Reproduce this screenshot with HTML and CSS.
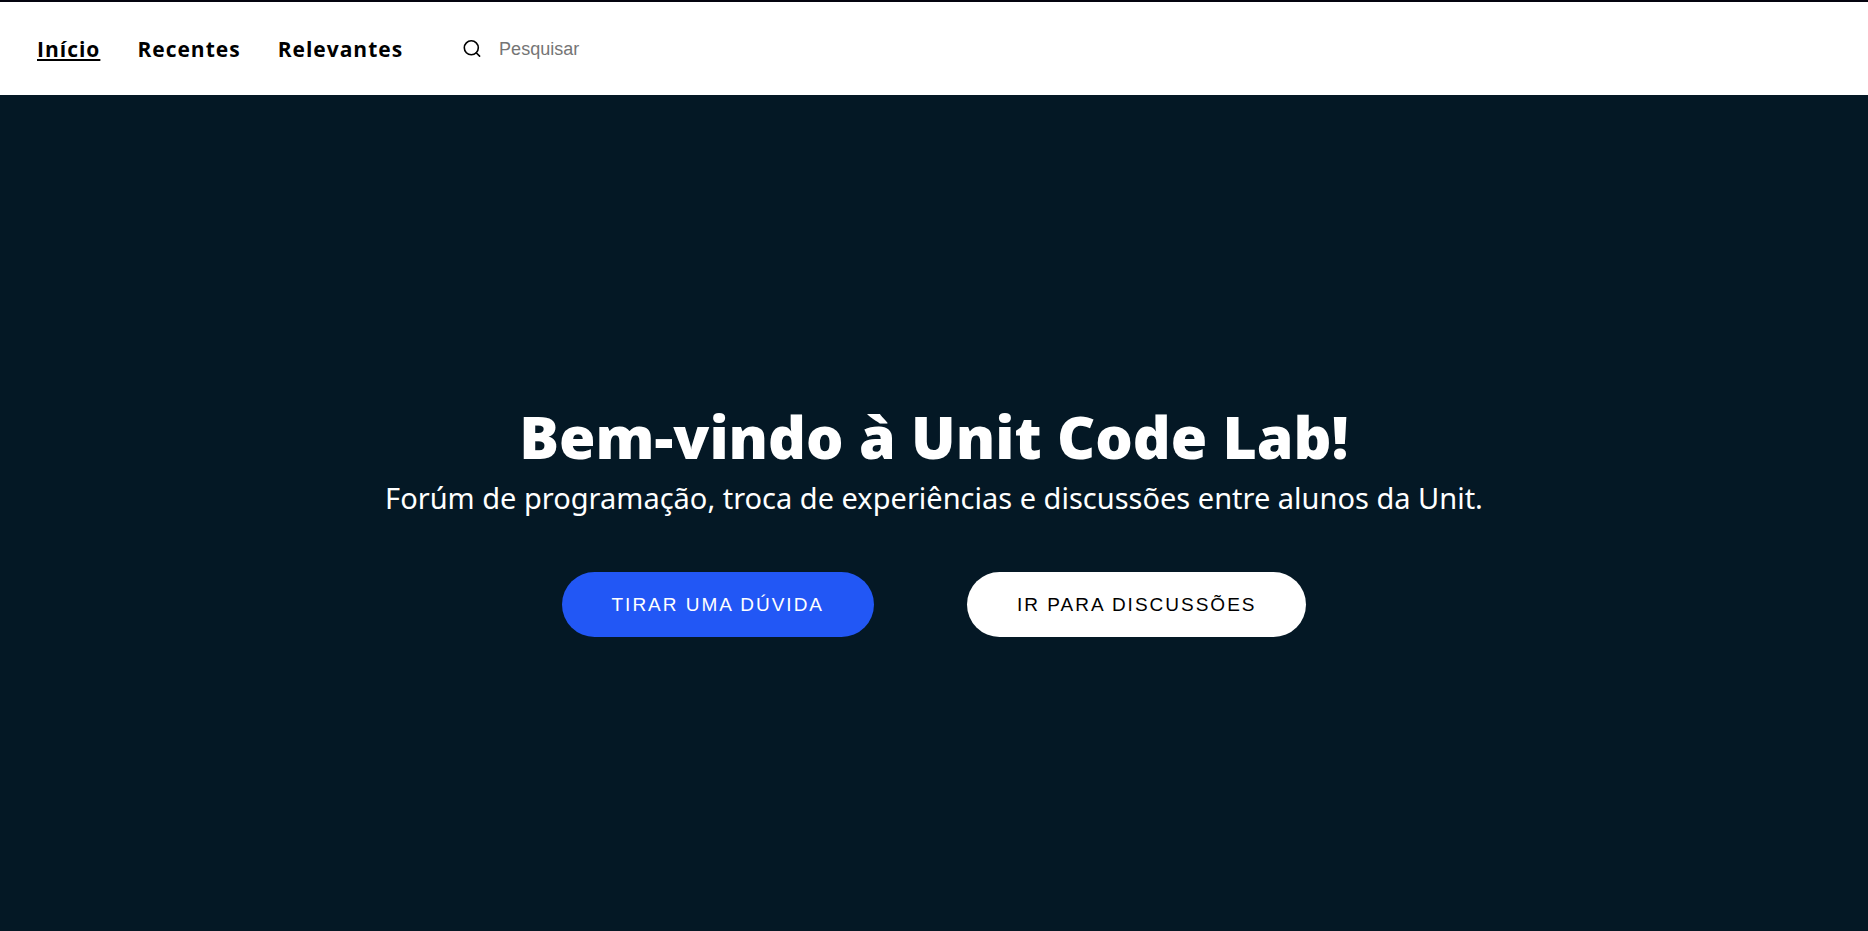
FILE: index.html
```html
<!DOCTYPE html>
<html lang="pt-BR">
<head>
<meta charset="utf-8">
<meta name="viewport" content="width=device-width, initial-scale=1">
<title>Unit Code Lab</title>
<link rel="stylesheet" href="styles.css">
</head>
<body>
<header class="header">
  <nav class="nav">
    <a class="nav-link active" href="#">Início</a>
    <a class="nav-link" href="#">Recentes</a>
    <a class="nav-link" href="#">Relevantes</a>
  </nav>
  <form class="search">
    <label class="search-label" for="search" aria-label="Pesquisar">
      <svg class="search-icon" viewBox="0 0 18 18" fill="none" stroke="currentColor" stroke-width="1.6" stroke-linecap="round"><circle cx="8.3" cy="7.8" r="7"/><path d="M13.2 12.7 16.6 16.1"/></svg>
    </label>
    <input class="search-input" id="search" type="text" placeholder="Pesquisar">
  </form>
</header>
<main class="hero">
  <h1 class="title">Bem-vindo à Unit Code Lab!</h1>
  <p class="subtitle">Forúm de programação, troca de experiências e discussões entre alunos da Unit.</p>
  <div class="actions">
    <button class="button primary" type="button">TIRAR UMA DÚVIDA</button>
    <button class="button" type="button">IR PARA DISCUSSÕES</button>
  </div>
</main>
</body>
</html>
```
FILE: styles.css
```css
* {
  box-sizing: border-box;
}

body {
  margin: 0;
  min-height: 100vh;
  display: flex;
  flex-direction: column;
  background: #041825;
  font-family: "Noto Sans", sans-serif;
}

.header {
  display: flex;
  align-items: center;
  gap: 60px;
  padding: 31px 37px;
  border-top: 2px solid #04040f;
  background: #fff;
  color: #000;
}

.nav {
  display: flex;
  gap: 37px;
  padding-top: 2px;
}

.nav-link {
  color: #000;
  font-family: "Open Sans", sans-serif;
  font-size: 21px;
  line-height: 29px;
  font-weight: 700;
  letter-spacing: 1px;
  text-decoration: none;
}

.nav-link.active {
  text-decoration: underline;
  text-decoration-thickness: 2px;
  text-underline-offset: 2px;
}

.search {
  display: flex;
  align-items: center;
  gap: 18px;
}

.search-label {
  display: flex;
}

.search-icon {
  width: 18px;
  height: 18px;
}

.search-input {
  width: 240px;
  padding: 0;
  border: 0;
  outline: 0;
  background: transparent;
  font: 18px/24px "Liberation Sans", Arial, sans-serif;
}

.search-input::placeholder {
  color: #757575;
}

.hero {
  flex: 1;
  display: flex;
  flex-direction: column;
  align-items: center;
  justify-content: center;
  padding: 32px 24px 24px;
  color: #fff;
  text-align: center;
}

.title {
  margin: 0 0 4px;
  font-size: 59px;
  line-height: 76px;
  font-weight: 900;
}

.subtitle {
  margin: 0;
  font-size: 29px;
  line-height: 40px;
}

.actions {
  display: flex;
  flex-wrap: wrap;
  justify-content: center;
  gap: 32px 93px;
  margin-top: 54px;
}

.button {
  padding: 21px 50px;
  border: 0;
  border-radius: 33px;
  background: #fff;
  color: #000;
  font: 19px/23px "Liberation Sans", Arial, sans-serif;
  letter-spacing: 2px;
}

.button.primary {
  background: #2257f5;
  color: #fff;
}
```
